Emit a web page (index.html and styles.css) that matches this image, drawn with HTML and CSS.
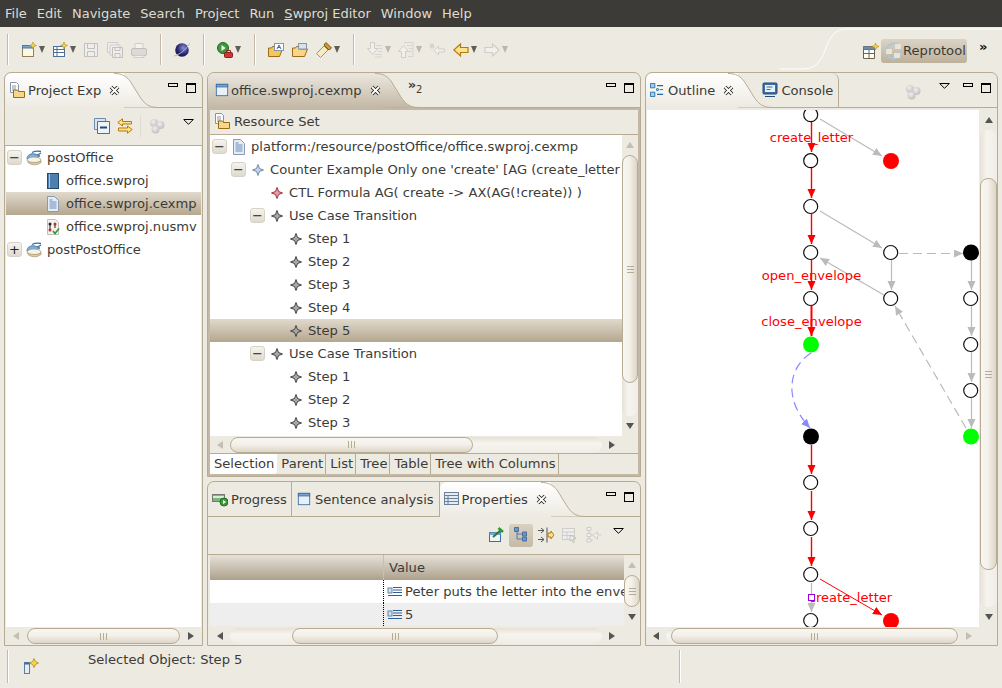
FILE: index.html
```html
<!DOCTYPE html>
<html lang="en">
<head>
    <meta charset="UTF-8">
    <title>Reprotool - Eclipse</title>
    <link rel="stylesheet" href="styles.css">
</head>
<body>

<!-- icon sheet -->
<svg class="icon-sheet" xmlns="http://www.w3.org/2000/svg">
    <defs>
        <linearGradient id="tabLight" x1="0" y1="0" x2="0" y2="1"><stop offset="0" stop-color="#ffffff"/><stop offset="1" stop-color="#edeae2"/></linearGradient>
        <linearGradient id="tabDark" x1="0" y1="0" x2="0" y2="1"><stop offset="0" stop-color="#ebe7df"/><stop offset="1" stop-color="#c3b8a5"/></linearGradient>
        <radialGradient id="globe" cx="0.6" cy="0.35" r="0.7"><stop offset="0" stop-color="#8f8fd0"/><stop offset="0.6" stop-color="#2b2b78"/><stop offset="1" stop-color="#14143c"/></radialGradient>
        <radialGradient id="ball" cx="0.4" cy="0.35" r="0.7"><stop offset="0" stop-color="#eeeeee"/><stop offset="1" stop-color="#bdbdbd"/></radialGradient>
    </defs>
    <symbol id="i-close" viewBox="0 0 11 11"><path d="M2 2L9 9M9 2L2 9" stroke="#222" stroke-width="3.6" fill="none"/><path d="M2 2L9 9M9 2L2 9" stroke="#fff" stroke-width="1.8" fill="none"/></symbol>
    <symbol id="i-drop" viewBox="0 0 11 6"><path d="M.7.5h9.600L5.500 5.300z" fill="#edeae2" stroke="#000"/></symbol>
    <symbol id="i-new" viewBox="0 0 16 16"><rect x="1.500" y="3.500" width="11" height="11" fill="#fdf8e4" stroke="#8d8160"/><rect x="1.500" y="3.500" width="11" height="2.500" fill="#7aa4d0" stroke="#4f78a4"/><path d="M12 0l1 2.500 2.500 1-2.500 1-1 2.500-1-2.500-2.500-1 2.500-1z" fill="#f6d54a" stroke="#b08a20" stroke-width=".6"/></symbol>
    <symbol id="i-newtable" viewBox="0 0 16 16"><rect x="1.500" y="4.500" width="11" height="10" fill="#fff" stroke="#4f6f98"/><path d="M1.500 7.500h11M1.500 10.500h11M5 5v9" stroke="#4f6f98"/><path d="M12 0l1 2.500 2.500 1-2.500 1-1 2.500-1-2.500-2.500-1 2.500-1z" fill="#f6d54a" stroke="#b08a20" stroke-width=".6"/></symbol>
    <symbol id="i-save" viewBox="0 0 16 16"><path d="M1.500 1.500h13v13h-13z" fill="#eee" stroke="#c2c0ba"/><path d="M4.500 1.500v5h7v-5M4.500 14.500v-5h7v5" fill="none" stroke="#c2c0ba"/></symbol>
    <symbol id="i-saveall" viewBox="0 0 16 16"><path d="M.5.500h10v10h-10z" fill="#eee" stroke="#cfcdc7"/><path d="M3 3h10v10H3z" fill="#eee" stroke="#cfcdc7"/><path d="M5.500 5.500h10v10h-10z" fill="#eee" stroke="#c2c0ba"/><path d="M8 5.500v3h5v-3M8 15.500v-4h5v4" fill="none" stroke="#c2c0ba"/></symbol>
    <symbol id="i-print" viewBox="0 0 16 16"><path d="M4 1.500h8v5H4z" fill="#f3f2ee" stroke="#cfcdc7"/><rect x=".5" y="6.500" width="15" height="7" rx="1.500" fill="#dcdad4" stroke="#c2c0ba"/><path d="M3 13.500h10v2H3z" fill="#eee" stroke="#cfcdc7"/></symbol>
    <symbol id="i-globe" viewBox="0 0 16 16"><circle cx="8" cy="8" r="6.800" fill="url(#globe)"/><path d="M0 14C5 13 12 8 16 1" stroke="#b8b8d8" fill="none"/></symbol>
    <symbol id="i-run" viewBox="0 0 16 16"><circle cx="6" cy="6" r="5.500" fill="#3c9a3c" stroke="#1f6e22"/><path d="M4.500 3l4 3-4 3z" fill="#fff"/><rect x="7.500" y="10.500" width="8" height="5" rx="1" fill="#cf3535" stroke="#8a2020"/><path d="M9.500 10.500v-2h4v2" fill="none" stroke="#8a2020"/></symbol>
    <symbol id="i-opentype" viewBox="0 0 16 16"><path d="M.5 14.500V6h3l1-1.500h4V7h6l-3 7.500z" fill="#f4c45e" stroke="#9a6c14"/><rect x="6.500" y="1.500" width="9" height="7" fill="#fff" stroke="#8a94a8"/><path d="M9 7l2-4 2 4M9.800 5.500h2.400" fill="none" stroke="#3a6ea8"/></symbol>
    <symbol id="i-folderopen" viewBox="0 0 16 16"><path d="M.5 14.500V6h3l1-1.500h3V7h8l-3 7.500z" fill="#f7d68a" stroke="#9a6c14"/><rect x="6.500" y="1.500" width="8" height="5.500" fill="#d8e2ee" stroke="#8a94a8"/></symbol>
    <symbol id="i-torch" viewBox="0 0 16 16"><path d="M.5 11.500L8 4l4 4-7.500 7.500z" fill="#f6ecc4" stroke="#a8925a"/><path d="M8 3l2-2.500 5.500 5.500L13 8z" fill="#d09a38" stroke="#7a5814"/></symbol>
    <symbol id="i-nextann" viewBox="0 0 16 16"><path d="M3.500.5h4v6h3l-5 6-5-6h3z" fill="#f2f0ea" stroke="#cfcdc7"/><path d="M9 3.500h6M11 6.500h4M11 9.500h4M8 12.500h7M8 15h7" stroke="#d6d4ce"/></symbol>
    <symbol id="i-prevann" viewBox="0 0 16 16"><path d="M3.500 15.500h4v-6h3l-5-6-5 6h3z" fill="#f2f0ea" stroke="#cfcdc7"/><path d="M6 .5h9v14H10M9 3.500h5M11 6.500h3M11 9.500h3" fill="none" stroke="#d6d4ce"/></symbol>
    <symbol id="i-lastedit" viewBox="0 0 16 16"><path d="M1 2l4 4M5 2L1 6M3 1v6M.5 4h5" stroke="#cfcdc7"/><path d="M9.500 4L5 8.500l4.500 4.500v-3h6v-3h-6z" fill="#f2f0ea" stroke="#cfcdc7"/></symbol>
    <symbol id="i-back" viewBox="0 0 16 16"><path d="M7.500 2L.8 8l6.700 6v-3.500h7.500v-5H7.500z" fill="#fbe38e" stroke="#b37a10" stroke-width="1.200"/></symbol>
    <symbol id="i-forward" viewBox="0 0 16 16"><path d="M8.500 2l6.700 6-6.700 6v-3.500H1v-5h7.500z" fill="#f2f0ea" stroke="#cfcdc7" stroke-width="1.200"/></symbol>
    <symbol id="i-perspective" viewBox="0 0 16 16"><path d="M.5 3.500h11v12H.5z" fill="#fff" stroke="#6e6248"/><path d="M.5 6.500h11M.5 10.500h11M6 6.500v9" stroke="#6e6248"/><rect x=".5" y="3.500" width="11" height="3" fill="#6a8cae"/><path d="M12.500 0l1 2.500 2.500 1-2.500 1-1 2.500-1-2.500-2.500-1 2.500-1z" fill="#f6d54a" stroke="#b08a20" stroke-width=".6"/></symbol>
    <symbol id="i-reprotool" viewBox="0 0 18 18"><circle cx="9" cy="9" r="7.500" fill="none" stroke="#a8c8dc" stroke-width="1.800"/><rect x="1" y="7" width="6" height="5" fill="#e8e4dc"/><rect x="10" y="2" width="6" height="5" fill="#e8e4dc"/><rect x="9" y="11" width="6" height="5" fill="#e8e4dc"/></symbol>
    <symbol id="i-explorer" viewBox="0 0 16 16"><path d="M1.500.5h6l2 2v8h-8z" fill="#fff" stroke="#8a94a8"/><path d="M3 4h4M3 6h4M3 8h4" stroke="#8a94a8"/><path d="M4.500 15.500V8h4l1 1.500h6v6z" fill="#f7d68a" stroke="#9a6c14"/></symbol>
    <symbol id="i-collapse" viewBox="0 0 16 16"><path d="M.5.500h11v11H.5z" fill="#d8e4f0" stroke="#6a8cae"/><path d="M3.500 3.500h12v12h-12z" fill="#eef3f8" stroke="#47719c"/><path d="M6 9.500h7" stroke="#1f4c80" stroke-width="2"/></symbol>
    <symbol id="i-link" viewBox="0 0 16 16"><path d="M5.500.8L.8 4.500l4.700 3.500V6h9V3.500h-9z" fill="#fbe38e" stroke="#b37a10"/><path d="M10.500 8l4.700 3.500-4.700 3.700V13h-9v-3h9z" fill="#fbe38e" stroke="#b37a10"/></symbol>
    <symbol id="i-balls" viewBox="0 0 16 16"><circle cx="5" cy="5" r="4" fill="url(#ball)"/><circle cx="11.500" cy="7" r="4" fill="url(#ball)"/><circle cx="6.500" cy="11.500" r="4" fill="url(#ball)"/></symbol>
    <symbol id="i-doc" viewBox="0 0 16 16"><path d="M2.500.5h7l4 4v11h-11z" fill="#e4ecf6" stroke="#8a9ab4"/><path d="M4.500 6h7M4.500 8h7M4.500 10h7M4.500 12h7M4.500 4h3" stroke="#6e8cb8"/></symbol>
    <symbol id="i-project" viewBox="0 0 16 16"><path d="M6 2.500C9 1 12 1 15 1.500M10 6l5-3" stroke="#3a6ea8" stroke-width="1.300" fill="none"/><path d="M1 9C1 5 5 3 9 4l5 2-4 2z" fill="#7fb0dc" stroke="#35689c" stroke-width=".8"/><ellipse cx="8" cy="10" rx="7" ry="3" fill="#f6f2e6" stroke="#a89a78" stroke-width=".8"/><path d="M2 12.500C6 15.500 11 15.500 15 12.500L15 11C11 13 5 13 2 11z" fill="#e0ce9c" stroke="#a89a78" stroke-width=".8"/></symbol>
    <symbol id="i-book" viewBox="0 0 16 16"><rect x="2.500" y=".5" width="11" height="15" fill="#4f7eb0" stroke="#23476e"/><path d="M4.500 1v14" stroke="#a8c4e0"/></symbol>
    <symbol id="i-nusmv" viewBox="0 0 16 16"><path d="M2.500.5h8l3 3v12h-11z" fill="#f4f2ee" stroke="#c2c0ba"/><circle cx="5" cy="5" r="1.500" fill="#222"/><circle cx="10" cy="5" r="1.500" fill="#c03030"/><circle cx="5" cy="11" r="1.500" fill="#c03030"/><path d="M5 6v4M10 6v3" stroke="#222"/><path d="M8 12l2 2.500 4-5" stroke="#2a9a30" stroke-width="1.600" fill="none"/></symbol>
    <symbol id="i-star-blue" viewBox="0 0 16 16"><path d="M8 2.500l1.500 4 4 1.500-4 1.500-1.500 4-1.500-4-4-1.500 4-1.500z" fill="#c4d4e4" stroke="#6e8cb0"/></symbol>
    <symbol id="i-star-red" viewBox="0 0 16 16"><path d="M8 2.500l1.500 4 4 1.500-4 1.500-1.500 4-1.500-4-4-1.500 4-1.500z" fill="#e0a0a8" stroke="#a83040"/></symbol>
    <symbol id="i-star-gray" viewBox="0 0 16 16"><path d="M8 2.500l1.500 4 4 1.500-4 1.500-1.500 4-1.500-4-4-1.500 4-1.500z" fill="#a8a8a8" stroke="#444"/></symbol>
    <symbol id="i-editor" viewBox="0 0 16 16"><rect x="1.500" y="1.500" width="13" height="13" fill="#e8f0f8" stroke="#3a6ea8"/><rect x="1.500" y="1.500" width="13" height="3" fill="#7aa4d0" stroke="#3a6ea8"/></symbol>
    <symbol id="i-progress" viewBox="0 0 16 16"><rect x=".5" y="3.500" width="12" height="7" fill="#7ab87a" stroke="#777"/><path d="M1 6h11" stroke="#d8ecd8" stroke-width="2"/><circle cx="12" cy="11" r="4" fill="#3c9a3c" stroke="#1f6e22"/><path d="M11 9l3 2-3 2z" fill="#fff"/></symbol>
    <symbol id="i-props" viewBox="0 0 16 16"><rect x=".5" y="1.500" width="14" height="12" fill="#e4ecf6" stroke="#6e7f98"/><path d="M.5 4.500h14M.5 7.500h14M.5 10.500h14M4 4.500v9" stroke="#6e7f98"/></symbol>
    <symbol id="i-outline" viewBox="0 0 16 16"><path d="M.5.500h5v5h-5zM.5 10.500h5v5h-5z" fill="#a8cce8" stroke="#1f6aa8"/><path d="M8 3h7M8 13h7" stroke="#1f6aa8" stroke-width="1.500"/><path d="M7.500 6.500h2v2h-2z" fill="#fff" stroke="#1f6aa8"/><path d="M11 7.500h4" stroke="#1f6aa8"/></symbol>
    <symbol id="i-console" viewBox="0 0 16 16"><rect x="1" y="1" width="14" height="11" rx="1" fill="#3f6ea8" stroke="#274a78"/><rect x="3" y="3" width="10" height="7" fill="#e8f0f8"/><path d="M4.500 5h6M4.500 7.500h4" stroke="#3f6ea8"/><path d="M3 15h10v-1H3z" fill="#274a78"/></symbol>
    <symbol id="i-pin" viewBox="0 0 16 16"><rect x="1.500" y="5.500" width="11" height="9" fill="#f0f4f8" stroke="#3a6ea8"/><rect x="1.500" y="5.500" width="11" height="2.500" fill="#7aa4d0"/><path d="M5 10L13 3" stroke="#2a7a30" stroke-width="2"/><path d="M10.500 1l4.500 4" stroke="#2a9a30" stroke-width="2.500"/></symbol>
    <symbol id="i-tree" viewBox="0 0 16 16"><path d="M4 3v9h5M4 7h5" fill="none" stroke="#5577aa"/><path d="M1.500.5h4v4h-4zM9.500 5h4v4h-4zM9.500 10h4v4h-4z" fill="#6f94c8" stroke="#4a6ea0"/></symbol>
    <symbol id="i-filter" viewBox="0 0 16 16"><path d="M0 3.500h6M0 12.500h6M9 .5v15" stroke="#555"/><path d="M3 1l3 2.500L3 6M3 10l3 2.500L3 15" fill="none" stroke="#555"/><path d="M10 6h3V4l3 4-3 4v-2h-3z" fill="#fbe38e" stroke="#b37a10"/></symbol>
    <symbol id="i-showcat" viewBox="0 0 16 16"><rect x=".5" y="1.500" width="12" height="11" fill="#eee" stroke="#cfcdc7"/><path d="M.5 5h12M.5 8.500h12M5 5v7" stroke="#cfcdc7"/><path d="M8 8l6 3-3 1 1.500 3-1.500 .5-1.500-3L8 14z" fill="#f0efea" stroke="#c2c0ba"/></symbol>
    <symbol id="i-treedis" viewBox="0 0 16 16"><path d="M3 3v10h4M3 8h4" fill="none" stroke="#cfcdc7"/><path d="M1 .5h4v3H1zM1 12h4v3H1zM1 6.500h4v3H1z" fill="#eee" stroke="#cfcdc7"/><path d="M15.500 8h-4V5L7 8.500l4.500 3.500V9" fill="#f0efea" stroke="#cfcdc7"/></symbol>
    <symbol id="i-listitem" viewBox="0 0 16 16"><rect x="1" y="4" width="4" height="5" fill="#cfe0f0" stroke="#5f86b0"/><path d="M6 3.500h9M6 6h9M6 8.500h9M1 11.500h14" stroke="#2f5f98"/></symbol>
    <symbol id="i-newstatus" viewBox="0 0 16 16"><rect x="1.500" y="4.500" width="5" height="11" fill="#e4ecf6" stroke="#5f7c9c"/><rect x="1.500" y="4.500" width="5" height="2" fill="#3a6ea8"/><path d="M11 .5l1.500 3 3 1.500-3 1.500-1.500 3-1.500-3-3-1.500 3-1.500z" fill="#f6d54a" stroke="#b08a20" stroke-width=".8"/></symbol>
</svg>

<div class="menubar">
    <span>File</span><span>Edit</span><span>Navigate</span><span>Search</span><span>Project</span><span>Run</span><span><u>S</u>wproj Editor</span><span>Window</span><span>Help</span>
</div>

<div class="toolbar">
    <i class="sep"></i>
    <svg class="ic tool"><use href="#i-new"/></svg><i class="arrow"></i>
    <svg class="ic tool"><use href="#i-newtable"/></svg><i class="arrow"></i>
    <svg class="ic tool"><use href="#i-save"/></svg>
    <svg class="ic tool"><use href="#i-saveall"/></svg>
    <svg class="ic tool"><use href="#i-print"/></svg>
    <i class="sep"></i>
    <svg class="ic tool"><use href="#i-globe"/></svg>
    <i class="sep"></i>
    <svg class="ic tool"><use href="#i-run"/></svg><i class="arrow"></i>
    <i class="sep"></i>
    <svg class="ic tool"><use href="#i-opentype"/></svg>
    <svg class="ic tool"><use href="#i-folderopen"/></svg>
    <svg class="ic tool"><use href="#i-torch"/></svg><i class="arrow"></i>
    <i class="sep"></i>
    <svg class="ic tool"><use href="#i-nextann"/></svg><i class="arrow off"></i>
    <svg class="ic tool"><use href="#i-prevann"/></svg><i class="arrow off"></i>
    <svg class="ic tool"><use href="#i-lastedit"/></svg>
    <svg class="ic tool"><use href="#i-back"/></svg><i class="arrow"></i>
    <svg class="ic tool"><use href="#i-forward"/></svg><i class="arrow off"></i>

    <svg class="persp-curve" viewBox="0 0 222 44"><path d="M0 41H23C38 41 42 30 46 20C50 10 54 1 66 1H222" fill="none" stroke="#fff"/></svg>
    <div class="persp">
        <svg class="ic"><use href="#i-perspective"/></svg>
        <div class="persp-btn"><svg class="ic-18"><use href="#i-reprotool"/></svg>Reprotool</div>
        <span class="chevrons">»</span>
    </div>
</div>

<div class="workbench">

    <!-- project explorer -->
    <section class="panel col-left">
        <div class="tabbar">
            <div class="tab active">
                <svg class="ic"><use href="#i-explorer"/></svg>
                <span class="tab-title">Project Exp</span>
                <svg class="close"><use href="#i-close"/></svg>
                <svg class="tab-curve" viewBox="0 0 44 35"><path d="M0 .5C8 .5 12 3 16 8L26 24C30 30 34 34.500 44 34.500H0Z" fill="url(#tabLight)"/><path d="M0 .5C8 .5 12 3 16 8L26 24C30 30 34 34.500 44 34.500" fill="none" stroke="#b8ab94"/></svg>
            </div>
            <div class="ctrls"><i class="min"></i><i class="max"></i></div>
        </div>
        <div class="viewbar explorer-bar">
            <svg class="ic"><use href="#i-collapse"/></svg>
            <svg class="ic"><use href="#i-link"/></svg>
            <i class="thin-sep"></i>
            <svg class="ic"><use href="#i-balls"/></svg>
            <svg class="dropdown"><use href="#i-drop"/></svg>
        </div>
        <div class="tree explorer-tree">
            <div class="row"><span class="toggle">−</span><svg class="ic"><use href="#i-project"/></svg><span>postOffice</span></div>
            <div class="row l1"><span class="no-toggle"></span><svg class="ic"><use href="#i-book"/></svg><span>office.swproj</span></div>
            <div class="row l1 selected"><span class="no-toggle"></span><svg class="ic"><use href="#i-doc"/></svg><span>office.swproj.cexmp</span></div>
            <div class="row l1"><span class="no-toggle"></span><svg class="ic"><use href="#i-nusmv"/></svg><span>office.swproj.nusmv</span></div>
            <div class="row"><span class="toggle">+</span><svg class="ic"><use href="#i-project"/></svg><span>postPostOffice</span></div>
        </div>
        <div class="hscroll explorer-scroll">
            <i class="sb-btn"><b class="tri-l off"></b></i>
            <div class="trough"><div class="thumb" style="width:100%"></div></div>
            <i class="sb-btn"><b class="tri-r"></b></i>
        </div>
    </section>

    <div class="col-center">
        <!-- model editor -->
        <section class="panel editor-panel">
            <div class="tabbar">
                <div class="tab active dark">
                    <svg class="ic-14"><use href="#i-editor"/></svg>
                    <span class="tab-title">office.swproj.cexmp</span>
                    <svg class="close"><use href="#i-close"/></svg>
                    <svg class="tab-curve" viewBox="0 0 44 35"><path d="M0 .5C8 .5 12 3 16 8L26 24C30 30 34 34.500 44 34.500H0Z" fill="url(#tabDark)"/><path d="M0 .5C8 .5 12 3 16 8L26 24C30 30 34 34.500 44 34.500" fill="none" stroke="#b8ab94"/></svg>
                </div>
                <span class="more">»<sub>2</sub></span>
                <div class="ctrls"><i class="min"></i><i class="max"></i></div>
            </div>
            <div class="frame">
                <div class="resource-head"><svg class="ic"><use href="#i-explorer"/></svg>Resource Set</div>
                <div class="split">
                    <div class="tree">
                        <div class="row"><span class="toggle">−</span><svg class="ic"><use href="#i-doc"/></svg><span>platform:/resource/postOffice/office.swproj.cexmp</span></div>
                        <div class="row l1"><span class="toggle">−</span><svg class="ic"><use href="#i-star-blue"/></svg><span>Counter Example Only one 'create' [AG (create_letter -&gt; AX(AG(!create_letter)))]</span></div>
                        <div class="row l2"><span class="no-toggle"></span><svg class="ic"><use href="#i-star-red"/></svg><span>CTL Formula AG( create -&gt; AX(AG(!create)) )</span></div>
                        <div class="row l2"><span class="toggle">−</span><svg class="ic"><use href="#i-star-gray"/></svg><span>Use Case Transition</span></div>
                        <div class="row l3"><span class="no-toggle"></span><svg class="ic"><use href="#i-star-gray"/></svg><span>Step 1</span></div>
                        <div class="row l3"><span class="no-toggle"></span><svg class="ic"><use href="#i-star-gray"/></svg><span>Step 2</span></div>
                        <div class="row l3"><span class="no-toggle"></span><svg class="ic"><use href="#i-star-gray"/></svg><span>Step 3</span></div>
                        <div class="row l3"><span class="no-toggle"></span><svg class="ic"><use href="#i-star-gray"/></svg><span>Step 4</span></div>
                        <div class="row l3 selected"><span class="no-toggle"></span><svg class="ic"><use href="#i-star-gray"/></svg><span>Step 5</span></div>
                        <div class="row l2"><span class="toggle">−</span><svg class="ic"><use href="#i-star-gray"/></svg><span>Use Case Transition</span></div>
                        <div class="row l3"><span class="no-toggle"></span><svg class="ic"><use href="#i-star-gray"/></svg><span>Step 1</span></div>
                        <div class="row l3"><span class="no-toggle"></span><svg class="ic"><use href="#i-star-gray"/></svg><span>Step 2</span></div>
                        <div class="row l3"><span class="no-toggle"></span><svg class="ic"><use href="#i-star-gray"/></svg><span>Step 3</span></div>
                    </div>
                    <div class="vscroll">
                        <i class="sb-btn-v"><b class="tri-u off"></b></i>
                        <div class="trough-v"><div class="thumb-v" style="height:228px"></div></div>
                        <i class="sb-btn-v"><b class="tri-d"></b></i>
                    </div>
                </div>
                <div class="hscroll pad-corner">
                    <i class="sb-btn"><b class="tri-l off"></b></i>
                    <div class="trough"><div class="thumb" style="width:243px"></div></div>
                    <i class="sb-btn"><b class="tri-r"></b></i>
                </div>
                <div class="page-tabs">
                    <span class="page-tab on">Selection</span><span class="page-tab">Parent</span><span class="page-tab">List</span><span class="page-tab">Tree</span><span class="page-tab">Table</span><span class="page-tab">Tree with Columns</span>
                </div>
            </div>
        </section>

        <!-- properties -->
        <section class="panel props-panel">
            <div class="tabbar">
                <div class="tab plain first"><svg class="ic"><use href="#i-progress"/></svg><span class="tab-title">Progress</span></div>
                <div class="tab plain"><svg class="ic-14"><use href="#i-editor"/></svg><span class="tab-title">Sentence analysis</span></div>
                <div class="tab active props-tab">
                    <svg class="ic"><use href="#i-props"/></svg>
                    <span class="tab-title">Properties</span>
                    <svg class="close"><use href="#i-close"/></svg>
                    <svg class="tab-curve" viewBox="0 0 44 35"><path d="M0 .5C8 .5 12 3 16 8L26 24C30 30 34 34.500 44 34.500H0Z" fill="url(#tabLight)"/><path d="M0 .5C8 .5 12 3 16 8L26 24C30 30 34 34.500 44 34.500" fill="none" stroke="#b8ab94"/></svg>
                </div>
                <div class="ctrls"><i class="min"></i><i class="max"></i></div>
            </div>
            <div class="viewbar props-bar">
                <svg class="ic"><use href="#i-pin"/></svg>
                <span class="toggled"><svg class="ic"><use href="#i-tree"/></svg></span>
                <svg class="ic"><use href="#i-filter"/></svg>
                <svg class="ic"><use href="#i-showcat"/></svg>
                <svg class="ic"><use href="#i-treedis"/></svg>
                <svg class="dropdown"><use href="#i-drop"/></svg>
            </div>
            <div class="split">
                <div class="prop-table">
                    <div class="prop-head"><span class="prop-name"></span><span class="prop-val">Value</span></div>
                    <div class="prop-row"><span class="prop-name"></span><span class="prop-val"><svg class="ic"><use href="#i-listitem"/></svg>Peter puts the letter into the envelope</span></div>
                    <div class="prop-row alt"><span class="prop-name"></span><span class="prop-val"><svg class="ic"><use href="#i-listitem"/></svg>5</span></div>
                </div>
                <div class="vscroll">
                    <i class="sb-btn-v"><b class="tri-u off"></b></i>
                    <div class="trough-v"><div class="thumb-v" style="height:32px"></div></div>
                    <i class="sb-btn-v"><b class="tri-d"></b></i>
                </div>
            </div>
            <div class="hscroll pad-corner">
                <i class="sb-btn"><b class="tri-l"></b></i>
                <div class="trough"><div class="thumb" style="width:206px;margin-left:62px"></div></div>
                <i class="sb-btn"><b class="tri-r"></b></i>
            </div>
        </section>
    </div>

    <!-- outline graph -->
    <section class="panel col-right">
        <div class="tabbar">
            <div class="tab active outline-tab">
                <svg class="ic-14"><use href="#i-outline"/></svg>
                <span class="tab-title">Outline</span>
                <svg class="close"><use href="#i-close"/></svg>
                <svg class="tab-curve" viewBox="0 0 44 35"><path d="M0 .5C8 .5 12 3 16 8L26 24C30 30 34 34.500 44 34.500H0Z" fill="url(#tabLight)"/><path d="M0 .5C8 .5 12 3 16 8L26 24C30 30 34 34.500 44 34.500" fill="none" stroke="#b8ab94"/></svg>
            </div>
            <div class="tab plain console-tab"><svg class="ic"><use href="#i-console"/></svg><span class="tab-title">Console</span></div>
            <div class="ctrls"><svg class="ic balls"><use href="#i-balls"/></svg><svg class="dropdown"><use href="#i-drop"/></svg><i class="min"></i><i class="max"></i></div>
        </div>
        <div class="split outline-body">
            <svg class="graph" viewBox="647 110 332 517">
                <defs>
                    <marker id="headRed" markerUnits="userSpaceOnUse" markerWidth="10" markerHeight="10" refX="9" refY="4" orient="auto"><path d="M0 0L9 4L0 8Z" fill="#f00"/></marker>
                    <marker id="headGray" markerUnits="userSpaceOnUse" markerWidth="10" markerHeight="10" refX="9" refY="4" orient="auto"><path d="M0 0L9 4L0 8Z" fill="#bbb"/></marker>
                    <marker id="headBlue" markerUnits="userSpaceOnUse" markerWidth="10" markerHeight="10" refX="9" refY="4" orient="auto"><path d="M0 0L9 4L0 8Z" fill="#8888ff"/></marker>
                </defs>
                <g class="e-gray">
                    <path d="M820 119L882 156"/><path d="M820 211L882 248"/>
                    <path class="dash" d="M899 253.500H963"/>
                    <path d="M891.500 260V290"/><path d="M884 295L820 258"/>
                    <path d="M971.500 260V290"/><path d="M971.500 306V336"/><path d="M971.500 352V382"/><path d="M971.500 398V428"/>
                    <path class="dash" d="M966 428L895 306"/>
                    <path d="M811.500 583V612"/>
                </g>
                <path class="e-blue" d="M811 353C797 362 791 376 792 391C793 405 800 417 810 428"/>
                <g class="e-red">
                    <path d="M811.500 122V152"/><path d="M811.500 168V198"/><path d="M811.500 214V244"/><path d="M811.500 260V290"/>
                    <path class="bold" d="M811.500 306V336"/>
                    <path d="M811.500 445V474"/><path d="M811.500 491V520"/><path d="M811.500 537V566"/>
                    <path class="thin" d="M820 579L882 615"/>
                </g>
                <g class="nodes">
                    <circle cx="810.700" cy="114.700" r="7"/><circle cx="810.700" cy="160.700" r="7"/><circle cx="810.700" cy="206.500" r="7"/>
                    <circle cx="810.700" cy="252.500" r="7"/><circle cx="810.700" cy="298.500" r="7"/>
                    <circle cx="810.700" cy="482.500" r="7"/><circle cx="810.700" cy="528.500" r="7"/><circle cx="810.700" cy="574.500" r="7"/><circle cx="810.700" cy="620.500" r="7"/>
                    <circle cx="890.700" cy="252.500" r="7"/><circle cx="890.700" cy="298.500" r="7"/>
                    <circle cx="970.700" cy="298.500" r="7"/><circle cx="970.700" cy="344.500" r="7"/><circle cx="970.700" cy="390.500" r="7"/>
                </g>
                <circle cx="891" cy="161" r="8" fill="#f00"/>
                <circle cx="891" cy="621" r="8" fill="#f00"/>
                <circle cx="811" cy="344.500" r="8" fill="#0f0"/>
                <circle cx="971" cy="436.500" r="8" fill="#0f0"/>
                <circle cx="811" cy="436.500" r="8" fill="#000"/>
                <circle cx="971" cy="252.500" r="8" fill="#000"/>
                <g class="edge-labels">
                    <text x="811.500" y="142">create_letter</text>
                    <text x="811.500" y="280">open_envelope</text>
                    <text x="811.500" y="326">close_envelope</text>
                    <text x="850.500" y="602">create_letter</text>
                </g>
                <rect class="handle" x="808.500" y="594.500" width="6" height="6"/>
            </svg>
            <div class="vscroll wide">
                <i class="sb-btn-v"><b class="tri-u"></b></i>
                <div class="trough-v"><div class="thumb-v" style="height:392px;margin-top:48px"></div></div>
                <i class="sb-btn-v"><b class="tri-d"></b></i>
            </div>
        </div>
        <div class="hscroll outline-scroll">
            <i class="sb-btn"><b class="tri-l"></b></i>
            <div class="trough"><div class="thumb" style="width:287px;margin-left:5px"></div></div>
            <i class="sb-btn"><b class="tri-r off"></b></i>
        </div>
    </section>
</div>

<div class="statusbar">
    <i class="sep"></i>
    <svg class="ic status-icon"><use href="#i-newstatus"/></svg>
    <span class="status-text">Selected Object: Step 5</span>
    <i class="sep status-end"></i>
</div>

</body>
</html>
```

FILE: styles.css
```css
* {
    box-sizing: border-box;
}
body {
    margin: 0;
    width: 1002px;
    height: 688px;
    overflow: hidden;
    display: flex;
    flex-direction: column;
    background-color: #edeae2;
    color: #3c3b37;
    font-family: "DejaVu Sans", sans-serif;
    font-size: 13.1px;
}
i, b {
    display: block;
    font-style: normal;
}
.icon-sheet {
    position: absolute;
    width: 0;
    height: 0;
}
.ic {
    width: 16px;
    height: 16px;
    flex: none;
}
.ic-14 {
    width: 14px;
    height: 14px;
    flex: none;
}
.ic-18 {
    width: 18px;
    height: 18px;
    flex: none;
}

/* Menu */
.menubar {
    height: 27px;
    flex: none;
    display: flex;
    align-items: center;
    gap: 10px;
    padding: 0 0 1px 5px;
    background-color: #3c3b37;
    color: #dfdbd2;
    font-size: 13px;
}

/* Main toolbar */
.toolbar {
    height: 45px;
    flex: none;
    display: flex;
    align-items: center;
    position: relative;
    padding-left: 2px;
}
.sep {
    width: 2px;
    height: 31px;
    flex: none;
    margin: 0 12px 0 5px;
    background-color: #fff;
    border-left: 1px solid #c4b9a6;
}
.arrow + .sep {
    margin-left: 6px;
}
.tool {
    margin-right: 8px;
}
.arrow {
    flex: none;
    margin: 0 7px 0 -6px;
    border-left: 3.5px solid transparent;
    border-right: 3.5px solid transparent;
    border-top: 7px solid #5f5d55;
}
.arrow.off {
    border-top-color: #bfb6a4;
}
.persp-curve {
    position: absolute;
    left: 780px;
    top: 1px;
    width: 222px;
    height: 44px;
}
.persp {
    margin: 2px 0 0 auto;
    display: flex;
    align-items: center;
    position: relative;
}
.persp-btn {
    display: flex;
    align-items: center;
    width: 86px;
    height: 24px;
    margin: 0 0 0 2px;
    padding-left: 4px;
    border-radius: 3px;
    background: linear-gradient(#dbd3c5, #bdb19b);
}
.chevrons {
    width: 35px;
    padding-left: 12px;
    margin-top: -8px;
    font-weight: bold;
    color: #111;
}

/* Panels */
.workbench {
    height: 574px;
    flex: none;
    display: flex;
    gap: 4px;
    padding-left: 4px;
}
.panel {
    display: flex;
    flex-direction: column;
    border: 1px solid #b8ab94;
    border-radius: 7px 7px 0 0;
    overflow: hidden;
}
.col-left {
    width: 199px;
}
.col-center {
    width: 434px;
    display: flex;
    flex-direction: column;
    gap: 4px;
}
.col-right {
    width: 353px;
}
.editor-panel {
    height: 405px;
}
.props-panel {
    height: 165px;
}
.tabbar {
    height: 35px;
    flex: none;
    display: flex;
    border-bottom: 1px solid #b8ab94;
}
.tab {
    height: 34px;
    flex: none;
    display: flex;
    align-items: center;
    position: relative;
}
.tab.active {
    height: 35px;
    padding-left: 4px;
    padding-bottom: 1px;
    background: linear-gradient(#fff, #edeae2);
    border-radius: 7px 0 0 0;
}
.tab.dark {
    padding-left: 7px;
    background: linear-gradient(#ebe7df, #c3b8a5);
}
.tab-title {
    margin-left: 3px;
    white-space: nowrap;
}
.tab.dark .tab-title,
.tab.props-tab .tab-title {
    margin-left: 2px;
}
.outline-tab .tab-title {
    margin-left: 4px;
}
.close {
    width: 11px;
    height: 11px;
    margin: 0 4px 0 8px;
    position: relative;
    z-index: 1;
}
.tab-curve {
    position: absolute;
    left: calc(100% - 10px);
    top: 0;
    width: 44px;
    height: 35px;
}
.tab.plain {
    padding: 0 5px 0 4px;
    border-right: 1px solid #b8ab94;
}
.tab.first {
    width: 84px;
}
.tab.plain .ic-14 {
    margin-left: 1px;
}
.tab.plain .ic-14 + .tab-title {
    margin-left: 4px;
}
.more {
    margin: 6px 0 0 23px;
    line-height: 12px;
    font-size: 13px;
    font-weight: bold;
    position: relative;
}
.more sub {
    font-size: 10px;
    font-weight: normal;
}
.ctrls {
    margin-left: auto;
    display: flex;
    align-items: flex-start;
    padding: 10px 6px 0 0;
}
.min {
    width: 10px;
    height: 4px;
    margin-right: 8px;
    border: 1px solid #000;
}
.max {
    width: 10px;
    height: 10px;
    border: 1px solid #000;
    border-top-width: 2px;
}
.dropdown {
    flex: none;
    width: 11px;
    height: 6px;
}
.balls {
    margin: 1px 18px 0 0;
}
.ctrls .dropdown {
    margin: 0 13px 0 0;
}

/* View toolbars */
.viewbar {
    flex: none;
    display: flex;
    align-items: center;
}
.explorer-bar {
    height: 39px;
    padding: 0 0 0 89px;
    border-bottom: 1px solid #b8ab94;
    margin-top: -1px;
}
.explorer-bar .ic + .ic {
    margin-left: 7px;
}
.thin-sep {
    width: 1px;
    height: 22px;
    margin: 0 8px 0 7px;
    background-color: #e0dbd0;
}
.explorer-bar .dropdown {
    margin: -8px 0 0 18px;
}
.props-bar {
    height: 39px;
    margin-top: -1px;
    padding-left: 280px;
    border-bottom: 1px solid #b8ab94;
}
.props-bar > .ic {
    margin-right: 8px;
}
.toggled {
    width: 24px;
    height: 23px;
    margin: 0 5px 0 -3px;
    display: flex;
    align-items: center;
    justify-content: center;
    border-radius: 3px;
    background: linear-gradient(#d8d0c1, #c5baa6);
}
.props-bar .dropdown {
    margin: -8px 0 0 3px;
}

/* Trees */
.tree {
    flex: 1;
    min-width: 0;
    overflow: hidden;
    background-color: #fff;
}
.explorer-tree {
    margin: 0 1px;
}
.row {
    height: 23px;
    display: flex;
    align-items: center;
    padding-left: 2px;
    white-space: nowrap;
}
.explorer-tree .row {
    padding-left: 1px;
}
.row.l1 {
    padding-left: 21px;
}
.row.l2 {
    padding-left: 40px;
}
.row.l3 {
    padding-left: 59px;
}
.explorer-tree .row.l1 {
    padding-left: 20px;
}
.row > .ic {
    margin-right: 4px;
}
.explorer-tree .row > .ic {
    margin-right: 5px;
}
.row.selected {
    background: linear-gradient(#e0d9cc, #b5a78f);
}
.toggle {
    width: 15px;
    height: 15px;
    flex: none;
    margin-right: 4px;
    display: flex;
    align-items: center;
    justify-content: center;
    border: 1px solid #d8d2c6;
    border-radius: 3px;
    background: linear-gradient(#f6f4ef, #e0dace);
    font-size: 13px;
    line-height: 1;
    color: #222;
}
.no-toggle {
    width: 19px;
    flex: none;
}

/* Editor */
.frame {
    flex: 1;
    min-height: 0;
    display: flex;
    flex-direction: column;
    border: 2px solid #c3b8a5;
}
.resource-head {
    height: 25px;
    flex: none;
    display: flex;
    align-items: center;
    gap: 4px;
    padding: 0 0 2px 4px;
    border-bottom: 1px solid #b8ab94;
}
.split {
    flex: 1;
    min-height: 0;
    display: flex;
}
.page-tabs {
    height: 21px;
    flex: none;
    display: flex;
    border-top: 1px solid #b8ab94;
}
.page-tab {
    padding: 0 2px 0 4px;
    line-height: 19px;
    border-right: 1px solid #b8ab94;
}
.page-tab.on {
    padding: 0 3px 0 4px;
    background-color: #fff;
    border-right: none;
    border-radius: 0 0 3px 0;
}

/* Properties */
.prop-table {
    flex: 1;
    min-width: 0;
    overflow: hidden;
    margin-left: 2px;
}
.prop-head {
    height: 25px;
    display: flex;
    align-items: center;
    background: linear-gradient(#e6e1d8, #ada18c);
}
.prop-name {
    width: 173px;
    flex: none;
    align-self: stretch;
}
.prop-head .prop-val {
    padding-left: 5px;
    border-left: 1px solid #c8bfae;
    line-height: 25px;
}
.prop-row {
    height: 23px;
    display: flex;
    background-color: #fff;
}
.prop-row.alt {
    background-color: #eeeeee;
}
.prop-row .prop-val {
    display: flex;
    align-items: center;
    gap: 2px;
    padding-left: 3px;
    white-space: nowrap;
    border-left: 1px dotted #000;
}

/* Scrollbars */
.hscroll {
    height: 18px;
    flex: none;
    display: flex;
    align-items: center;
}
.pad-corner {
    height: 17px;
    padding-right: 16px;
}
.props-panel .hscroll {
    height: 18px;
    padding: 0 18px 0 2px;
}
.outline-scroll {
    padding-right: 18px;
}
.sb-btn {
    width: 20px;
    height: 16px;
    flex: none;
    display: flex;
    align-items: center;
    justify-content: center;
}
.explorer-scroll .sb-btn {
    width: 22px;
}
.trough {
    flex: 1;
    min-width: 0;
    height: 16px;
    border-radius: 8px;
    background: linear-gradient(#e6e1d6, #f6f4ef 40%, #f0ede6);
}
.thumb {
    height: 16px;
    display: flex;
    align-items: center;
    justify-content: center;
    border: 1px solid #b8ab94;
    border-radius: 8px;
    background: linear-gradient(#f8f6f2, #f4f1ea 45%, #ddd6c8);
}
.thumb::after {
    content: "";
    width: 7px;
    height: 7px;
    background: repeating-linear-gradient(to right, #b8ab94 0 1px, transparent 1px 3px);
}
.vscroll {
    width: 16px;
    flex: none;
    display: flex;
    flex-direction: column;
    background-color: #edeae2;
}
.vscroll.wide {
    width: 18px;
    padding-left: 1px;
}
.sb-btn-v {
    height: 20px;
    flex: none;
    display: flex;
    align-items: center;
    justify-content: center;
}
.trough-v {
    flex: 1;
    min-height: 0;
    border-radius: 8px;
    background: linear-gradient(to right, #e6e1d6, #f6f4ef 40%, #f0ede6);
}
.thumb-v {
    display: flex;
    align-items: center;
    justify-content: center;
    border: 1px solid #b8ab94;
    border-radius: 8px;
    background: linear-gradient(to right, #f8f6f2, #f4f1ea 45%, #ddd6c8);
}
.thumb-v::after {
    content: "";
    width: 7px;
    height: 7px;
    background: repeating-linear-gradient(to bottom, #b8ab94 0 1px, transparent 1px 3px);
}
.tri-l, .tri-r {
    border-top: 4px solid transparent;
    border-bottom: 4px solid transparent;
}
.tri-l {
    border-right: 6px solid #555;
}
.tri-r {
    border-left: 6px solid #555;
}
.tri-u, .tri-d {
    border-left: 4px solid transparent;
    border-right: 4px solid transparent;
}
.tri-u {
    border-bottom: 6px solid #555;
}
.tri-d {
    border-top: 6px solid #555;
}
.tri-l.off {
    border-right-color: #c4bfb4;
}
.tri-r.off {
    border-left-color: #c4bfb4;
}
.tri-u.off {
    border-bottom-color: #c4bfb4;
}

/* Outline */
.console-tab {
    margin-left: 20px;
    padding: 0 3px 0 0;
    border-radius: 0 7px 0 0;
}
.outline-body {
    padding: 2px 0 0 1px;
}
.graph {
    width: 332px;
    height: 517px;
    flex: none;
    background-color: #fff;
}
.nodes circle {
    fill: #fff;
    stroke: #111;
    stroke-width: 1.2;
}
.e-gray path {
    fill: none;
    stroke: #bbb;
    stroke-width: 1.2;
    marker-end: url(#headGray);
}
.e-gray .dash {
    stroke-dasharray: 9 5;
}
.e-blue {
    fill: none;
    stroke: #8888ff;
    stroke-width: 1.2;
    stroke-dasharray: 9 5;
    marker-end: url(#headBlue);
}
.e-red path {
    fill: none;
    stroke: #f00;
    stroke-width: 1.4;
    marker-end: url(#headRed);
}
.e-red .bold {
    stroke-width: 2;
}
.e-red .thin {
    stroke-width: 1;
}
.edge-labels text {
    font-size: 13.1px;
    fill: #f00;
    text-anchor: middle;
}
.handle {
    fill: #fff;
    stroke: #a000e0;
}

/* Status */
.statusbar {
    flex: 1;
    display: flex;
    align-items: flex-start;
    padding: 4px 0 0 2px;
}
.statusbar .sep {
    height: 33px;
    margin: 0 14px 0 5px;
}
.status-icon {
    margin-top: 8px;
}
.status-text {
    width: 591px;
    margin: 2px 0 0 49px;
}
.statusbar .status-end {
    margin-left: 0;
}
```
